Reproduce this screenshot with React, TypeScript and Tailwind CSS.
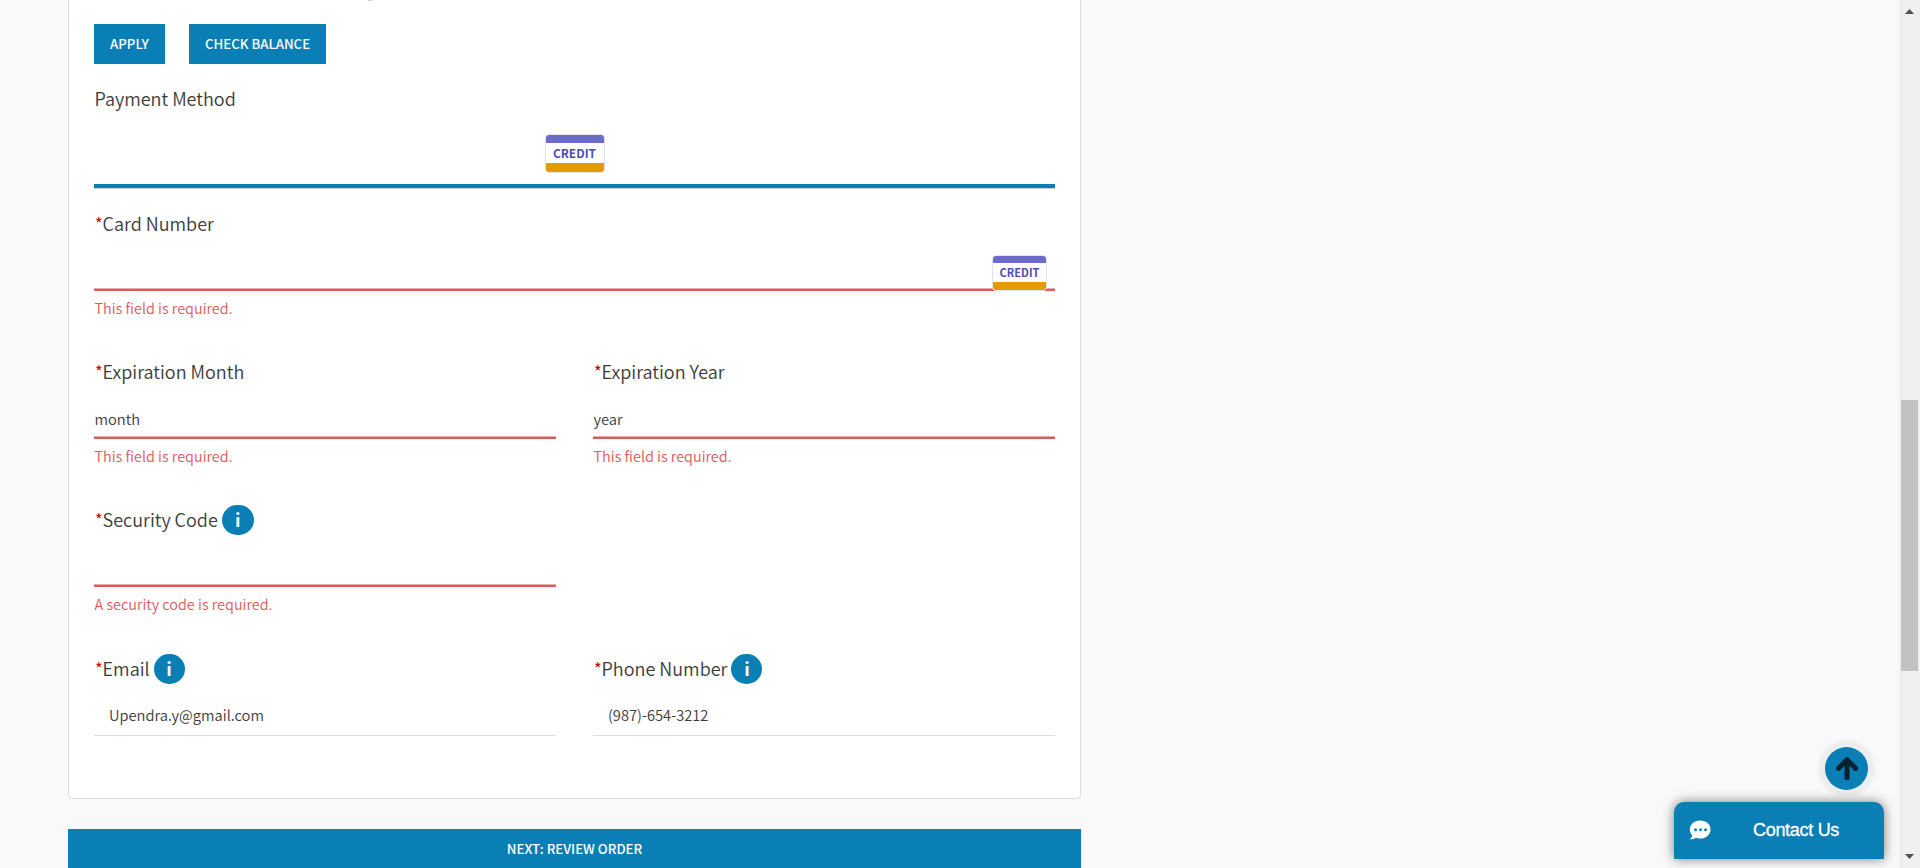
import type { ReactNode } from "react";

function CreditCard({ className, textClass }: { className: string; textClass: string }) {
  return (
    <div className={`flex flex-col overflow-hidden rounded-[4px] border border-[#e3e3ea] bg-white ${className}`}>
      <div className="h-[22%] bg-[#6c6bcb]" />
      <div className={`flex flex-1 items-center justify-center font-bold text-[#4f4bb3] ${textClass}`}>CREDIT</div>
      <div className="h-[24%] bg-[#e39b00]" />
    </div>
  );
}

function Info({ className }: { className: string }) {
  return (
    <span
      className={`flex h-[30px] items-center justify-center rounded-[15px] bg-[#0a7fb5] pb-[2px] text-[18px] font-bold leading-[28px] text-white ${className}`}
    >
      i
    </span>
  );
}

type FieldProps = {
  label: string;
  value?: string;
  error?: string;
  info?: string;
  children?: ReactNode;
};

function Field({ label, value, error, info, children }: FieldProps) {
  return (
    <div className="relative flex flex-1 flex-col pt-5">
      <div className="flex h-[30px] items-center pl-px text-[18px] leading-[28px]">
        <span className="w-[7.6px] pb-[2px] text-[16.5px] font-normal text-[#cc0000]">*</span>
        <span className="pb-[2px]">{label}</span>
        {info && <Info className={info} />}
      </div>
      <div className={`flex h-[49px] items-center text-[14.7px] leading-[22px] ${error ? "pl-[0.5px] pt-[14px]" : "pl-[15px] pt-[12px]"}`}>
        {value}
      </div>
      {error ? (
        <>
          <div className="h-[3px] border-t border-[#eba9a9] bg-[#dd5a5a]" />
          <div className="pl-[0.5px] pt-[4px] text-[14.45px] leading-[26px] text-[#dd5a5a]">{error}</div>
        </>
      ) : (
        <div className="mt-[2px] h-px bg-[#dcdcdc]" />
      )}
      {children}
    </div>
  );
}

function Button({ className, children }: { className: string; children: ReactNode }) {
  return (
    <button
      className={`flex h-10 items-center justify-center bg-[#0a7fb5] pb-px text-[13.2px] font-medium leading-5 text-white ${className}`}
    >
      {children}
    </button>
  );
}

export default function App() {
  return (
    <div className="flex h-[868px] w-[1920px] overflow-hidden bg-[#f9f9f9] font-['Noto_Sans_CJK_SC',sans-serif] font-[350] text-[#3a3a3a]">
      <main className="flex flex-1 flex-col pl-[68px]">
        <section className="flex h-[799px] w-[1013px] shrink-0 flex-col rounded-b-[4px] border border-t-0 border-[#dcdcdc] bg-white px-[25px]">
          <div className="ml-[274px] h-px w-[4px] bg-[#cfcbd6]" />
          <div className="mt-[23px] flex gap-6">
            <Button className="w-[71px]">APPLY</Button>
            <Button className="w-[137px]">CHECK BALANCE</Button>
          </div>
          <h2 className="mt-[19px] mb-px h-[30px] pl-[0.5px] text-[18px] leading-[30px] font-[350]">Payment Method</h2>
          <div className="flex h-[75px] justify-center border-b border-[#cfcfcf] pt-[20px] shadow-[inset_0_-4px_0_#0a7fb5]">
            <CreditCard className="h-[39px] w-[60px]" textClass="text-[11.9px] leading-none" />
          </div>
          <div className="flex h-[148px]">
            <Field label="Card Number" error="This field is required.">
              <div className="absolute right-[8px] top-[66px]">
                <CreditCard className="h-[36px] w-[55px]" textClass="text-[11px] leading-none" />
              </div>
            </Field>
          </div>
          <div className="flex h-[148px] gap-[37px]">
            <Field label="Expiration Month" value="month" error="This field is required." />
            <Field label="Expiration Year" value="year" error="This field is required." />
          </div>
          <div className="flex h-[149px] gap-[37px]">
            <Field label="Security Code" error="A security code is required." info="ml-[4px] w-[32px]" />
            <div className="flex-1" />
          </div>
          <div className="flex gap-[37px]">
            <Field label="Email" value="Upendra.y@gmail.com" info="ml-[4px] w-[31px]" />
            <Field label="Phone Number" value="(987)-654-3212" info="ml-[4px] w-[31px]" />
          </div>
        </section>
        <Button className="mt-[30px] w-[1013px] shrink-0">NEXT: REVIEW ORDER</Button>
      </main>

      <aside className="flex w-[225px] flex-col items-end pr-[15px] pt-[743px]">
        <button className="mr-[12px] flex size-[51px] shrink-0 items-center justify-center rounded-full bg-[#eeeeee] shadow-[0_0_6px_rgba(0,0,0,0.12)]">
          <span className="flex size-[43px] items-center justify-center rounded-full bg-[#0a7fb5]">
            <svg viewBox="0 0 448 512" className="mb-px h-[25px] w-[22px] fill-[#04222f] stroke-[#04222f]" strokeWidth="24" strokeLinejoin="round">
              <path d="M34.9 289.5l-22.2-22.2c-9.4-9.4-9.4-24.6 0-33.9L207 39c9.4-9.4 24.6-9.4 33.9 0l194.3 194.3c9.4 9.4 9.4 24.6 0 33.9L413 289.4c-9.5 9.5-25 9.3-34.3-.4L264 168.6V456c0 13.3-10.7 24-24 24h-32c-13.3 0-24-10.7-24-24V168.6L69.2 289.1c-9.3 9.8-24.8 10-34.3.4z" />
            </svg>
          </span>
        </button>
        <button className="mt-[8px] flex h-[57px] w-[210px] shrink-0 items-center rounded-t-[10px] bg-[#0a7fb5] pl-[15px] font-['Liberation_Sans',Arial,sans-serif] text-[18px] font-normal text-white shadow-[0_0_12px_rgba(0,0,0,0.5)]">
          <svg viewBox="0 0 22 20" className="mb-[2px] h-[20px] w-[22px]">
            <path
              d="M11.2 0.5C5.2 0.5 0.9 4.4 0.9 9.4c0 2.3.9 4.3 2.4 5.9-.4 1.6-1.3 2.9-2.6 4 2.2.2 4.3-.5 6-1.6 1.4.5 2.9.8 4.5.8 5.9 0 10.3-4 10.3-9.1S17.1.5 11.2.5z"
              fill="white"
            />
            <circle cx="6.5" cy="9.7" r="1.5" fill="#0a7fb5" />
            <circle cx="11.5" cy="9.7" r="1.5" fill="#0a7fb5" />
            <circle cx="16.5" cy="9.7" r="1.5" fill="#0a7fb5" />
          </svg>
          <span className="mb-px ml-[42px] tracking-[-0.3px] [-webkit-text-stroke:0.3px_white]">Contact Us</span>
        </button>
      </aside>

      <div className="flex w-[21px] flex-col items-center bg-[#f0f0f0] pt-[9px]">
        <svg viewBox="0 0 9 5" className="h-[5px] w-[9px] shrink-0 fill-[#505050]">
          <path d="M0 5L4.5 0L9 5z" />
        </svg>
        <div className="mt-[386px] h-[271px] w-[17px] shrink-0 bg-[#c1c1c1]" />
        <svg viewBox="0 0 9 5" className="mt-[183px] h-[5px] w-[9px] shrink-0 fill-[#505050]">
          <path d="M0 0L4.5 5L9 0z" />
        </svg>
      </div>
    </div>
  );
}
